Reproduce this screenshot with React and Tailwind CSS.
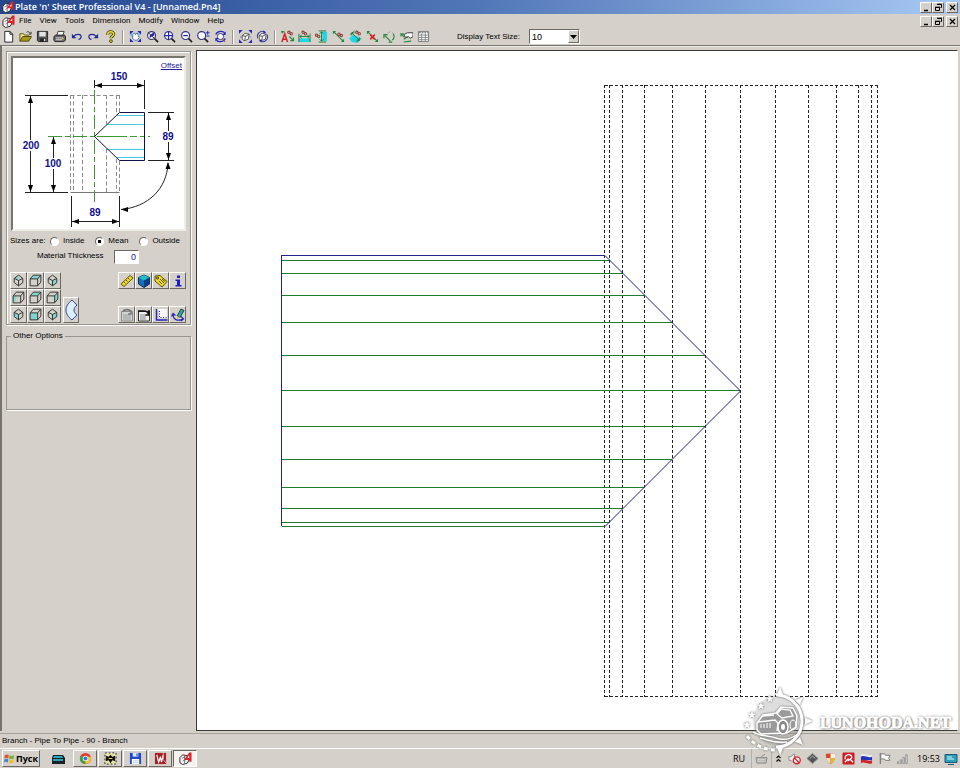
import React from "react";

const UI = "font-['Open_Sans','Noto_Sans',sans-serif]";
const MS = "font-['Liberation_Sans',Arial,sans-serif]";
const RAISED =
  "border border-t-white border-l-white border-r-[#6b6862] border-b-[#6b6862] bg-[#d5d1ca]";
const SUNKEN =
  "border border-t-[#6b6862] border-l-[#6b6862] border-r-white border-b-white";

function Icon({ children, className = "size-[14px]" }) {
  return (
    <svg viewBox="0 0 14 14" className={className} fill="none" aria-hidden="true">
      {children}
    </svg>
  );
}

/* ---------- application logo ---------- */
function AppLogo({ className }) {
  return (
    <Icon className={className}>
      <path d="M1 6l3-3 5 1 2 4-2 4-5 1.500-3-2z" fill="#f4f4f4" stroke="#222" />
      <path d="M3 7l4-2M4 10l4-3M6 4v8" stroke="#555" strokeWidth="0.800" />
      <path d="M6 7.500l5-7h2.500v10H11V8.500H6z" fill="#d8262c" />
      <path d="M9 6.500L11 3.500v3z" fill="#fff" />
    </Icon>
  );
}

/* ---------- toolbar icons ---------- */
const Lens = ({ children, cx = 6, cy = 6 }) => (
  <>
    <circle cx={cx} cy={cy} r="4.300" fill="#f8fbff" stroke="#30307a" strokeWidth="1.200" />
    <path d={`M${cx + 3} ${cy + 3}l4 4`} stroke="#222" strokeWidth="1.800" />
    {children}
  </>
);

const GreenArrow = ({ d = "M2 2l10 10" }) => (
  <>
    <path d={d} stroke="#1d8a3c" strokeWidth="1.100" />
    <path d="M1 1h3.500L1 4.500zM13 13H9.500L13 9.500z" fill="#1d8a3c" />
  </>
);

const DimMark = ({ x = 7, y = 2, c = "#8c3a34" }) => (
  <>
    <circle cx={x + 1.5} cy={y + 1.5} r="1.300" stroke={c} strokeWidth="1.100" />
    <circle cx={x + 4} cy={y + 3} r="1.300" stroke={c} strokeWidth="1.100" />
  </>
);

const fileIcons = [
  ["New", <path d="M3 1.500h5.500L11.500 4.500v8.500H3zM8.500 1.500v3h3" fill="#fff" stroke="#222" />],
  ["Open", <>
    <path d="M1 12V4h4l1 1.500h4V8" fill="#f2e58a" stroke="#5b5312" />
    <path d="M1 12l3-5h9.500l-3 5z" fill="#a89a1c" stroke="#4b4510" />
    <path d="M8 2.500c2-1.500 3.500-.5 4 1.500M13 2v2.500h-2.500" stroke="#222" strokeWidth="0.900" />
  </>],
  ["Save", <>
    <path d="M1.500 1.500h11v11h-10l-1-1z" fill="#555" stroke="#222" />
    <path d="M3.500 2h7v5h-7z" fill="#e2e2e2" />
    <path d="M4.500 9h6v3.500h-6z" fill="#222" /><path d="M8.500 9.500h1.500v2.500H8.500z" fill="#ddd" />
  </>],
  ["Print", <>
    <path d="M4 6l1.500-4.500H12L10.500 6z" fill="#fff" stroke="#333" />
    <path d="M1 7l2-1.500h9.500l1 1.500v4l-2 1.500H2L1 11z" fill="#666" stroke="#222" />
    <path d="M3 8.500h8M3 10.500h7" stroke="#eee" strokeWidth="0.900" />
    <path d="M10 9.500h2" stroke="#e3d33a" />
  </>],
  ["Undo", <><path d="M4 7c2-3 8-3 8 0 0 2-1.500 3-3 3" stroke="#1c2a98" strokeWidth="1.200" /><path d="M2 4v5h5z" fill="#1c2a98" /></>],
  ["Redo", <><path d="M10 7C8 4 2 4 2 7c0 2 1.500 3 3 3" stroke="#1c2a98" strokeWidth="1.200" /><path d="M12 4v5H7z" fill="#1c2a98" /></>],
  ["Help", <>
    <path d="M4 5c0-4 6.500-4 6.500-.5C10.500 6.500 7.500 6.500 7.500 9" stroke="#3a3a0c" strokeWidth="3.200" />
    <path d="M4 5c0-4 6.500-4 6.500-.5C10.500 6.500 7.500 6.500 7.500 9" stroke="#ece12c" strokeWidth="1.600" />
    <circle cx="7.500" cy="12" r="1.500" fill="#ece12c" stroke="#3a3a0c" />
  </>],
];

const zoomIcons = [
  ["Pan and zoom", <>
    <path d="M1 1h4L1 5zM13 1v4L9 1zM13 13H9l4-4zM1 13V9l4 4z" fill="#2424b8" />
    <path d="M4 5l2-2 1 2 2-2 1 3 1 2-2 3H6L4 9z" fill="#fff" stroke="#3b6dae" />
    <path d="M3 4l-1 3M10 3l2 2" stroke="#58b8d8" strokeWidth="1.200" />
  </>],
  ["Zoom previous", <Lens><path d="M9 2L4 6v3l2-2 3-1z" fill="#2424b8" /><path d="M2 2.500L9 9" stroke="#222" /></Lens>],
  ["Zoom all", <Lens><path d="M6 1v10M1 6h10" stroke="#2424b8" strokeWidth="1.200" /></Lens>],
  ["Zoom out", <Lens><path d="M3.500 6h5" stroke="#2424b8" strokeWidth="1.400" /></Lens>],
  ["Zoom in or out", <Lens cx={5} cy={6}><path d="M9.500 3h4M11.500 1v4M10 6.500h3.500" stroke="#2424b8" strokeWidth="1" /></Lens>],
  ["Redraw", <>
    <circle cx="7" cy="7" r="3.300" fill="#fff" stroke="#30307a" />
    <path d="M2 5c1-4 8-5 10-1M12 9c-1 4-8 5-10 1" stroke="#2424b8" strokeWidth="1.400" />
    <path d="M12.500 1.500v4H9zM1.500 12.500v-4H5z" fill="#2424b8" /><path d="M9 9l3 4" stroke="#b63838" />
  </>],
];

const cubeBody = (
  <path d="M3.500 6l3-2.500 4.500 1-1 5.500-4.500 1.500-2-1.500zM3.500 6l3.500 1 4-2.500M7 7l-1 4.500" fill="#fff" stroke="#444" strokeWidth="0.900" />
);
const viewIcons = [
  ["Fit view", <><path d="M0 0h4L0 4zM14 0v4L10 0zM14 14h-4L14 10zM0 14v-4L4 14z" fill="#2424b8" /><path d="M2 7v1M12 7v1" stroke="#2424b8" />{cubeBody}</>],
  ["Rotate view", <>{cubeBody}<path d="M2 9C0 4 5 0 9 2M12 5c2 5-3 9-7 7" stroke="#2c3c9c" strokeWidth="1.100" /><path d="M8 .5l3 2-3 1.500zM6 13.500l-3-2L6 10z" fill="#2424b8" /></>],
];

const dimIcons = [
  ["Text", <><path d="M1 13L4 4 7 13M2 10h4" stroke="#d2232a" strokeWidth="1.600" /><path d="M0 1h4L1 4z" fill="#1d8a3c" /><path d="M9 7l4 4M10 11.500h3.500V8" stroke="#1d8a3c" strokeWidth="1.200" /><DimMark x={7} y={1} /></>],
  ["Horizontal dimension", <><path d="M1 9h12v4H1z" fill="#20d6e6" /><path d="M1 4v9M13 4v9M2 7h10M4 5L2 7l2 2M10 5l2 2-2 2" stroke="#1a7a38" /><DimMark x={4} y={1} /></>],
  ["Vertical dimension", <><path d="M8 2h5v10H8z" fill="#20d6e6" /><path d="M4 1h8M4 13h8M7 2v10M5 4l2-2 2 2M5 10l2 2 2-2" stroke="#1a7a38" /><DimMark x={0} y={4} /></>],
  ["Aligned dimension", <><GreenArrow /><DimMark x={6} y={3} /></>],
  ["Parallel dimension", <><path d="M0 9l5-4 8 4-4 5-6-1z" fill="#20d6e6" /><path d="M1 5l5-4M9 13l4-4M3 3l8 8M3 6V3h3M11 8v3H8" stroke="#1a7a38" /><DimMark x={7} y={1} /></>],
  ["Delete dimension", <><GreenArrow /><path d="M4.500 5l5 5M9.500 5l-5 5" stroke="#d2232a" strokeWidth="1.800" /></>],
  ["Angle dimension", <><path d="M2 6l6 6M1 9V5h4M10 13H6M11 4c2 3 1 5-1 7" stroke="#1d8a3c" strokeWidth="1.200" /><path d="M5 3l3-1M10 3l2 1" stroke="#888" strokeDasharray="1 1" /></>],
  ["Move dimension", <><path d="M1 4l4 4M1 7V4h3M4 13l8-1M4 10l5-3" stroke="#1d8a3c" strokeWidth="1.200" /><path d="M4 5l4-2h6v4l-3 2-2-2-3 1z" fill="#fff" stroke="#333" /></>],
  ["Table", <><path d="M1.500 1.500h11v11h-11z" fill="#fff" stroke="#777" /><path d="M2 3h10" stroke="#444" strokeDasharray="2 1" /><path d="M2 5.500h10M2 8h10M2 10.500h10M5 4v8M9 4v8" stroke="#777" strokeWidth="0.900" /></>],
];

function ToolGroup({ items }) {
  return (
    <div className="flex">
      {items.map(([name, art]) => (
        <button key={name} type="button" aria-label={name} className="flex h-4 w-[17px] items-center justify-center">
          <Icon className="size-[13px]">{art}</Icon>
        </button>
      ))}
    </div>
  );
}

const Separator = () => <div className="ml-[3px] mr-1 h-[14px] w-px bg-[#98958e] shadow-[1px_0_0_#fff]" />;

/* ---------- window buttons ---------- */
function WindowButtons() {
  const b = `flex h-[11px] w-3 items-center justify-center ${RAISED}`;
  return (
    <div className="ml-auto flex pr-[2px]">
      <button type="button" aria-label="Minimize" className={b}>
        <svg viewBox="0 0 9 9" className="size-[9px]"><path d="M2 7.500h4" stroke="#000" strokeWidth="1.500" /></svg>
      </button>
      <button type="button" aria-label="Restore" className={b}>
        <svg viewBox="0 0 9 9" className="size-[9px]" fill="none" stroke="#000"><path d="M3.500 1.500h4v3h-1M3 1.200h5M1.500 4.500h4v3h-4zM1 4.200h5" /></svg>
      </button>
      <button type="button" aria-label="Close" className={`ml-[2px] ${b}`}>
        <svg viewBox="0 0 9 9" className="size-[9px]"><path d="M2 2l5 5M7 2L2 7" stroke="#000" strokeWidth="1.300" /></svg>
      </button>
    </div>
  );
}

/* ---------- small dimensioned sketch ---------- */
const Head = ({ x, y, dir }) => {
  const shapes = {
    up: `M${x} ${y}l-2.500 7h5z`,
    down: `M${x} ${y}l-2.500-7h5z`,
    left: `M${x} ${y}l7-2.500v5z`,
    right: `M${x} ${y}l-7-2.500v5z`,
  };
  return <path d={shapes[dir]} fill="#000" />;
};

function Label({ x, y, children }) {
  return (
    <>
      <rect x={x - 9} y={y - 9} width="18" height="11" fill="#fff" />
      <text x={x} y={y} textAnchor="middle" className="fill-[#10108c] font-['Liberation_Sans',Arial,sans-serif] text-[10px] font-bold">
        {children}
      </text>
    </>
  );
}

function Sketch() {
  return (
    <svg viewBox="13 58 171 171" className="block w-full" fill="none">
      <g stroke="#8a8a8a" strokeDasharray="4 2.500">
        <path d="M70.500 95.500h49M119.500 95v17M119.500 161v31M70.500 95v97M73.500 95v97M82.500 95v97M106.500 95v29M106.500 149v43M116.500 95v18M116.500 159v33" />
      </g>
      <path d="M70.500 192.500h49" stroke="#777" />
      <path d="M94.500 90v112M48 136.500h102" stroke="#3f9a33" strokeDasharray="14 3 5 3" />
      <path d="M94.500 136.500l25-24h25v48h-25z" fill="#fff" />
      <path d="M117 115.500h27M107 124.500h37M107 149.500h37M117 157.500h27" stroke="#45c8e0" />
      <path d="M97 136.500h47" stroke="#3f9a33" strokeDasharray="30 3 7 3" />
      <path d="M94.500 136.500l25-24h25v48h-25z" stroke="#12124a" />
      <g stroke="#222">
        <path d="M94.500 80v8M144.500 80v29M95 85.500h49" />
        <path d="M25 95.500h43M25 192.500h43M30.500 96v96M53.500 137v55" />
        <path d="M148 112.500h26M148 160.500h26M168.500 113v47" />
        <path d="M71.500 196v31M119.500 196v31M72 221.500h47" />
        <path d="M168 163c-1 26-20 44-47 46.500" />
      </g>
      <Head x={95} y={85.5} dir="left" /><Head x={144} y={85.5} dir="right" />
      <Head x={30.5} y={96} dir="up" /><Head x={30.5} y={192} dir="down" />
      <Head x={53.5} y={137} dir="up" /><Head x={53.5} y={192} dir="down" />
      <Head x={168.5} y={113} dir="up" /><Head x={168.5} y={160} dir="down" />
      <Head x={72} y={221.5} dir="left" /><Head x={119} y={221.5} dir="right" />
      <Head x={121} y={209.5} dir="left" /><Head x={168} y={162} dir="up" />
      <Label x={119} y={80}>150</Label>
      <Label x={31} y={149}>200</Label>
      <Label x={53} y={167}>100</Label>
      <Label x={168} y={140}>89</Label>
      <Label x={95} y={216}>89</Label>
    </svg>
  );
}

/* ---------- view cubes ---------- */
const T = "#7fd6cf";
const boxLines = "M2 5.500h7V12H2zM2 5.500L5 2h7L9 5.500M12 2v6.500L9 12";
const isoLines = "M7 2l4 3v4l-4 3-4-3V5zM7 12V7M3 5l4 2 4-2";
const views = [
  ["Top left view", "M3 5l4-3v5z", isoLines], ["Top view", "M2 5.500L5 2h7L9 5.500z", boxLines], ["Top right view", "M7 7l4-2v4l-4 3z", isoLines],
  ["Left view", "M2 5.500h3V9l-3 3z", boxLines], ["Back view", "M5 2h7l-3 3.500H3z", boxLines], ["Right view", "M9 5.500L12 2v6.500L9 12z", boxLines],
  ["Bottom left view", "M3 5l4 2v5L3 9z", isoLines], ["Front view", "M2 5.500h7V12H2z", boxLines], ["Bottom right view", "M7 7l4-2v4l-4 3z", isoLines],
];

const actions = [
  ["Measure", <><path d="M1 10l9-8.500 3 2.500-9 8.500z" fill="#f2dc1c" stroke="#5d5208" /><path d="M4 8l1.500 1.500M6 6l1.500 1.500M8 4l1.500 1.500" stroke="#5d5208" /></>],
  ["Solid view", <><path d="M7 1l5.500 2.500v6.500L7 13.500 1.500 10V3.500z" fill="#1470b8" stroke="#072a4c" /><path d="M7 1l5.500 2.500L7 6.500l-5.500-3z" fill="#23bfc4" /><path d="M7 6.500l5.500-3v6.500L7 13.500z" fill="#0c3e88" /></>],
  ["Label", <><path d="M1 2l5-.5 7 6-5 5.500-7-6z" fill="#f2dc1c" stroke="#5d5208" /><circle cx="3.500" cy="4" r="1" fill="#fff" stroke="#222" /><path d="M6 5l4 4M5 7l3 3M8 5l3 2.500" stroke="#443c08" strokeWidth="0.900" /></>],
  ["Information", <path d="M6 1.500h3v2.500H6zM4.500 5.500H9V11h1.500v1.500H4.500V11H6V7H4.500z" fill="#1c1cc8" />],
];
const outputs = [
  ["Report", <><path d="M1.500 3.500h11v9.500h-11z" fill="#d4d4d4" stroke="#8b8b8b" /><path d="M3 7h8M3 9h8M3 11h8" stroke="#999" /><path d="M3 4c1-3 6-3 8-1v3H8" stroke="#777" strokeWidth="1.600" /></>],
  ["Edit report", <><path d="M1.500 3.500h11v9.500h-11z" fill="#eee" stroke="#333" /><path d="M3 7h6M3 9h6M3 11h6" stroke="#888" /><path d="M1 3h6c2 0 4 1 5 4M12 2v5H8.500" stroke="#111" strokeWidth="1.600" /></>],
  ["Plot", <><path d="M3 1h10v9H5V3z" fill="#f8f8f8" /><path d="M2.500 1v11h11" stroke="#2424b8" strokeWidth="1.400" /><path d="M5.500 3v6.500H13" stroke="#2424b8" strokeDasharray="1 1.500" /></>],
  ["Draw", <><path d="M6 8l4-7 3 1.500-4 7z" fill="#2aa89a" stroke="#1b4c50" /><path d="M6 8v3l3-1.500z" fill="#e2c44c" /><path d="M2 6c0 7 6 7 10 5M.5 8.500L2 5.500l2.500 2M10 8.500l2.500 2.500L10 13" stroke="#2424b8" strokeWidth="1.200" /></>],
];

function SmallButton({ name, children }) {
  return (
    <button type="button" aria-label={name} className={`flex size-[17px] items-center justify-center ${RAISED}`}>
      {children}
    </button>
  );
}

function Sidebar() {
  return (
    <aside className={`w-[196px] shrink-0 border-l-2 border-[#77746e] pl-1 pt-[5px] text-[8px] leading-3 text-black ${MS}`}>
      <section className="w-[185px] border border-[#99968f] px-[3px] pb-px pt-1 shadow-[inset_1px_1px_0_#fff,1px_1px_0_#fff]">
        <div className="relative mx-px border-2 border-b-[#efede8] border-l-[#77746e] border-r-[#efede8] border-t-[#77746e] bg-white">
          <Sketch />
          <a href="#offset" className="absolute right-[2px] top-[2px] text-[8px] text-[#22229a] underline">Offset</a>
        </div>
        <div className="mt-1 flex items-center">
          <span className="w-10 whitespace-nowrap">Sizes are:</span>
          <div className="flex gap-[11px]">
            {["Inside", "Mean", "Outside"].map((s) => (
              <label key={s} className="flex items-center gap-1 whitespace-nowrap">
                <input
                  type="radio"
                  name="sizes"
                  defaultChecked={s === "Mean"}
                  className={`size-[9px] shrink-0 appearance-none rounded-full bg-white checked:bg-[radial-gradient(circle,#000_0_1.5px,#fff_2px)] ${SUNKEN}`}
                />
                {s}
              </label>
            ))}
          </div>
        </div>
        <div className="mt-[3px] flex items-start pl-[27px]">
          <label htmlFor="thickness" className="w-[77px] leading-3">Material Thickness</label>
          <input
            id="thickness"
            defaultValue="0"
            className={`h-[14px] w-[25px] bg-white px-[2px] text-right text-[9px] text-[#22229a] ${SUNKEN}`}
          />
        </div>
        <div className="mt-2 flex pr-px">
          <div className="grid grid-cols-3">
            {views.map(([n, face, lines]) => (
              <SmallButton key={n} name={n}>
                <Icon className="size-[15px]">
                  <path d={face} fill={T} />
                  <path d={lines} stroke="#333" strokeWidth="0.900" />
                </Icon>
              </SmallButton>
            ))}
          </div>
          <button type="button" aria-label="Develop pattern" className={`ml-[2px] flex h-[26px] w-4 items-center justify-center self-end ${RAISED}`}>
            <svg viewBox="0 0 14 24" className="h-6 w-[14px]">
              <path d="M8 2C0 8 0 16 8 22l5-5c-4-3-4-7 0-10z" fill="#d9f0fa" stroke="#3440a8" />
            </svg>
          </button>
          <div className="ml-auto flex flex-col justify-between">
            {[actions, outputs].map((row, i) => (
              <div key={i} className="flex">
                {row.map(([n, art]) => (
                  <SmallButton key={n} name={n}><Icon>{art}</Icon></SmallButton>
                ))}
              </div>
            ))}
          </div>
        </div>
      </section>
      <fieldset className="mt-[5px] h-20 w-[185px] border border-[#99968f] px-1 shadow-[1px_1px_0_#fff]">
        <legend className="px-[2px]">Other Options</legend>
      </fieldset>
    </aside>
  );
}

/* ---------- main drawing ---------- */
const pipeLines = [605, 610, 623, 645, 673, 706, 741, 776, 809, 837, 859, 872, 878];
const branchLines = [
  [260, 609], [273, 623], [295, 645], [322, 672], [355, 705], [390, 740],
  [426, 705], [459, 672], [487, 645], [508, 623], [522, 609], [526, 605],
];

function Drawing() {
  return (
    <svg viewBox="197 51 760 679" className="block size-full" fill="none" role="img" aria-label="Pipe to pipe branch">
      <g stroke="#222" strokeDasharray="3 2" shapeRendering="crispEdges">
        {pipeLines.map((x) => <path key={x} d={`M${x - 0.5} 85v612`} />)}
        <path d="M605 85.500h273M605 696.500h273" />
      </g>
      <g stroke="#1f7d30" shapeRendering="crispEdges">
        {branchLines.map(([y, x]) => <path key={y} d={`M282 ${y + 0.5}H${x}`} />)}
      </g>
      <path d="M281.500 526V255.500H605" stroke="#23238c" shapeRendering="crispEdges" />
      <path d="M605 255.500l135.500 135.500L605 526.500" stroke="#20208c" />
    </svg>
  );
}

/* ---------- taskbar ---------- */
const tasks = [
  ["Chrome", <><circle cx="7" cy="7" r="6" fill="#e23c2e" /><path d="M7 7L1.800 4A6 6 0 0 0 7 13z" fill="#3aa546" /><path d="M7 7v6a6 6 0 0 0 5.500-8H8z" fill="#f3c62d" /><circle cx="7" cy="7" r="2.900" fill="#fff" /><circle cx="7" cy="7" r="2.200" fill="#3b78d8" /></>],
  ["The Bat", <><path d="M1 1h12v12H1z" fill="#e8e4b0" stroke="#222" strokeDasharray="2 2" /><path d="M2 4l3 1 2-2 2 2 3-1v6l-3-1-2 3-2-3-3 1z" fill="#111" /><path d="M5 7h4" stroke="#e8e070" /></>],
  ["Total Commander", <><path d="M1 1h12v12H1z" fill="#2146c8" /><path d="M4 1h6v4H4z" fill="#dce8ff" /><path d="M3 7.500h8V13H3z" fill="#fff" /><path d="M8 2h1.500v2.500H8zM4 9.500h6M4 11.500h6" fill="#2146c8" stroke="#8aa4e4" strokeWidth="0.600" /></>],
  ["Drafting", <><path d="M1 1h12v12H1z" fill="#a81c22" /><path d="M3 3l2 8 2-6 1 6 2-8" stroke="#fff" strokeWidth="1.300" /><path d="M10 1v7l3 4" stroke="#e8b8b8" /></>],
];

const tray = [
  ["Volume muted", <><path d="M1 5h2l4-3v10L3 9H1z" fill="#eee" stroke="#888" /><circle cx="9.500" cy="9" r="3.700" fill="#fff" stroke="#d8222a" strokeWidth="1.500" /><path d="M7 6.500l5 5" stroke="#d8222a" strokeWidth="1.500" /></>],
  ["Device", <><path d="M1 7l6-5.500L13 7l-6 5.500z" fill="#555" stroke="#8f8f8f" /><path d="M4 7l3-2.500L10 7" stroke="#bbb" /></>],
  ["Security", <><path d="M2 2c2 0 4 0 5-1 1 1 3 1 5 1 0 5-1 9-5 11C3 11 2 7 2 2z" fill="#d84a24" /><path d="M7 1c1 1 3 1 5 1 0 2 0 3-.3 4.500H7z" fill="#f4f0e8" /><path d="M2.300 6.500H7V13C4 11.500 3 9 2.300 6.500z" fill="#e8dfd0" /><path d="M7 6.500h4.700C11 9.500 10 11.500 7 13z" fill="#e7b62c" /></>],
  ["Antivirus", <><rect x=".5" y=".5" width="13" height="13" rx="1.500" fill="#cf1b22" /><path d="M3.500 8c-1-6 7-7 7-2 0 2-4 2-4 4M9 8l3 3M3 11l4-4" stroke="#fff" strokeWidth="1.400" /></>],
  ["Keyboard layout", <><path d="M1 3c4-2 8 2 12 0v3H1z" fill="#eef0f8" /><path d="M1 5c4-2 8 2 12 0v4H1z" fill="#2336b8" /><path d="M1 9c4-2 8 2 12 0v3c-4 2-8-2-12 0z" fill="#d2232a" /></>],
  ["Action center", <><path d="M2.500 1v12" stroke="#777" strokeWidth="1.300" /><path d="M3 2h4l1 1.500h5l-1.500 3L13 9H8L7 7.500H3z" fill="#f8f8f8" stroke="#777" /></>],
  ["Network", <path d="M1.500 10.500v2h1.500v-2zM4.500 8.500v4H6v-4zM7.500 6v6.500H9V6zM10.500 3v9.500H12V3z" fill="#f2f2f2" stroke="#888" strokeWidth="0.900" />],
];

function Taskbar() {
  return (
    <footer className={`flex h-5 shrink-0 items-center border-t border-white bg-[#d5d1ca] text-[9px] leading-3 ${UI}`}>
      <button type="button" className={`ml-[2px] flex h-[17px] w-[38px] items-center gap-px px-px text-[9px] font-bold ${RAISED}`}>
        <Icon className="size-[11px]">
          <path d="M1 3c2-1.500 3-1.500 5-.5L5.500 7C4 6 2 6 .5 7z" fill="#e2552c" />
          <path d="M7 3c2 1 4 1 6 0l-.5 4c-2 1-4 1-6 0z" fill="#72b53a" />
          <path d="M.5 8c2-1 3-1 5 0L5 12c-1.500-1-3.500-1-5 0z" fill="#3e86d8" />
          <path d="M6.500 8c2 1 4 1 6 0l-.5 4c-2 1-4 1-6 0z" fill="#f1bf2c" />
        </Icon>
        Пуск
      </button>
      <button type="button" aria-label="Scanner" className="ml-[11px] flex h-4 w-[14px] items-center">
        <Icon>
          <path d="M2 3h10l2 3v6H1V6z" fill="#1a2228" /><path d="M3 4h8l1 2H2z" fill="#28a8c0" /><path d="M2 8h10" stroke="#34cfe0" strokeWidth="1.500" />
        </Icon>
      </button>
      <div className="ml-2 flex gap-px">
        {tasks.map(([n, art]) => (
          <button key={n} type="button" aria-label={n} className={`flex h-[17px] w-6 items-center justify-center ${RAISED}`}>
            <Icon className="size-[13px]">{art}</Icon>
          </button>
        ))}
        <button type="button" aria-label="Plate 'n' Sheet" className={`flex h-[17px] w-6 items-center justify-center bg-[#f3f2ef] ${SUNKEN}`}>
          <AppLogo className="size-[13px]" />
        </button>
      </div>
      <div className="ml-auto flex h-full items-center">
        <span className="mr-[6px]">RU</span>
        <span className="flex h-full items-center border-x border-[#b3b0a8] px-[3px]">
          <Icon className="size-[13px]">
            <path d="M1 6h12l-1 6H2z" fill="#b9b7b2" stroke="#8e8c88" /><path d="M3 8h8M3 10h8" stroke="#eee" strokeDasharray="1 1" /><path d="M7 6c0-3 3-2 4-4" stroke="#8e8c88" />
          </Icon>
        </span>
        <button type="button" aria-label="Show hidden icons" className="ml-[3px] mr-[6px] flex w-[7px]">
          <svg viewBox="0 0 7 9" className="h-[9px] w-[7px]" fill="none" stroke="#111"><path d="M1.500 4L3.500 2l2 2M1.500 7.500l2-2 2 2" strokeWidth="1.200" /></svg>
        </button>
        <div className="flex gap-[5px]">
          {tray.map(([n, art]) => (
            <span key={n} title={n}><Icon className="size-[13px]">{art}</Icon></span>
          ))}
        </div>
        <span className="ml-2 mr-1 whitespace-nowrap">19:53</span>
        <button type="button" aria-label="Show desktop" className="mr-[2px]">
          <Icon>
            <path d="M1 2.500h12v8H1z" fill="#2ba0b8" stroke="#1d5c78" /><path d="M3 5h5M3 7h7" stroke="#d8f4fa" /><path d="M4 12.500h6" stroke="#1d5c78" />
          </Icon>
        </button>
      </div>
    </footer>
  );
}

/* ---------- watermark ---------- */
const spikes = [-88, -45, 0, 45, 88];
const stars = [[770, 698, 4], [761, 705, 4], [752, 714, 4], [747, 724, 4]];
const star = (x, y, r) =>
  Array.from({ length: 10 }, (_, i) => {
    const a = (Math.PI / 5) * i - Math.PI / 2;
    const q = i % 2 ? r * 0.42 : r;
    return `${(x + q * Math.cos(a)).toFixed(1)},${(y + q * Math.sin(a)).toFixed(1)}`;
  }).join(" ");

function Watermark() {
  return (
    <div className="pointer-events-none absolute bottom-[13px] right-[9px] flex items-center gap-[6px]">
      <svg viewBox="740 686 74 68" className="h-[68px] w-[74px] drop-shadow-[0_0_1px_#555]" fill="none">
        <circle cx="779" cy="720" r="26" fill="#888" fillOpacity="0.120" />
        <path d="M776 694a26 26 0 1 1 0 52" stroke="#fff" strokeWidth="3" />
        {spikes.map((a) => (
          <path key={a} d="M805 716.500l8 3.500-8 3.500z" fill="#fff" transform={`rotate(${a} 779 720)`} />
        ))}
        {stars.map(([x, y, r]) => <polygon key={y} points={star(x, y, r)} fill="#fff" />)}
        <path d="M747 735a37 37 0 0 0 30 14" stroke="#fff" strokeWidth="3" strokeDasharray="4 3" />
        <path d="M757 722l6-8 13-2 5-6 12 1 4 8-1 11-9 6-26 1-4-4z" fill="#9a9a9a" stroke="#fff" strokeWidth="1.500" />
        <path d="M758 721l17-2 3 3-1 8M777 713l4-5 9 1 3 6-11 2zM762 715l12-1" stroke="#fff" strokeWidth="1.300" />
        <path d="M761 723v4M764 723v4M767 722v5M770 722v5" stroke="#fff" />
        <ellipse cx="783" cy="726" rx="5" ry="7" fill="#8a8a8a" stroke="#fff" strokeWidth="1.500" />
        <ellipse cx="783" cy="726" rx="2" ry="3" fill="#fff" />
        <ellipse cx="793" cy="724" rx="3" ry="5" stroke="#fff" />
        <path d="M753 731c9 5 15 3 23 6s15 1 22-4M760 737c8 1 13 6 27 4" stroke="#fff" strokeWidth="1.500" />
      </svg>
      <span className="pt-1 font-['Liberation_Serif',serif] text-[16px] font-bold leading-5 text-white [-webkit-text-stroke:1px_#fff] [text-shadow:0_0_2px_#555,0_0_3px_#777,1px_1px_2px_#777]">
        LUNOHODA.NET
      </span>
    </div>
  );
}

const menus = ["File", "View", "Tools", "Dimension", "Modify", "Window", "Help"];

export default function App() {
  return (
    <div className="relative flex h-screen flex-col overflow-hidden bg-[#d5d1ca] text-black">
      <header className={`flex h-[14px] shrink-0 items-center bg-linear-to-r from-[#24468e] via-[#5277b8] to-[#a9c9f4] ${UI}`}>
        <AppLogo className="ml-[2px] size-[12px]" />
        <h1 className="ml-px whitespace-nowrap text-[9px] font-semibold leading-3 text-white">
          Plate 'n' Sheet Professional V4 - [Unnamed.Pn4]
        </h1>
        <WindowButtons />
      </header>
      <nav className="flex h-[14px] shrink-0 items-center font-['Roboto','Open_Sans',sans-serif]">
        <AppLogo className="ml-[2px] size-[13px]" />
        <div className="ml-1 flex gap-2 text-[8px] leading-3">
          {menus.map((m) => <button key={m} type="button">{m}</button>)}
        </div>
        <WindowButtons />
      </nav>
      <div className={`flex h-[17px] shrink-0 items-center text-[9px] ${MS}`}>
        <ToolGroup items={fileIcons} />
        <Separator />
        <ToolGroup items={zoomIcons} />
        <Separator />
        <ToolGroup items={viewIcons} />
        <Separator />
        <ToolGroup items={dimIcons} />
        <label htmlFor="text-size" className="ml-[25px] whitespace-nowrap text-[8px]">Display Text Size:</label>
        <div className="relative ml-[9px]">
          <select id="text-size" defaultValue="10" className={`block h-[15px] w-[51px] appearance-none rounded-none bg-white px-[2px] text-[9px] leading-3 ${SUNKEN}`}>
            <option>8</option>
            <option>10</option>
            <option>12</option>
          </select>
          <span className={`pointer-events-none absolute right-px top-px flex h-[13px] w-[11px] items-center justify-center ${RAISED}`}>
            <svg viewBox="0 0 7 4" className="h-1 w-[7px]"><path d="M0 0h7L3.500 4z" /></svg>
          </span>
        </div>
      </div>
      <main className="flex min-h-0 flex-1 border-t border-[#77746e] shadow-[inset_0_1px_0_#efede8]">
        <Sidebar />
        <div className="mr-[2px] mt-1 min-w-0 flex-1 border border-[#3c3a37] border-r-white bg-white">
          <Drawing />
        </div>
      </main>
      <div className={`mt-[2px] flex h-[15px] shrink-0 items-center border-t border-[#a5a29b] pl-[2px] text-[8px] ${MS}`}>
        Branch - Pipe To Pipe - 90 - Branch
      </div>
      <Taskbar />
      <Watermark />
    </div>
  );
}
